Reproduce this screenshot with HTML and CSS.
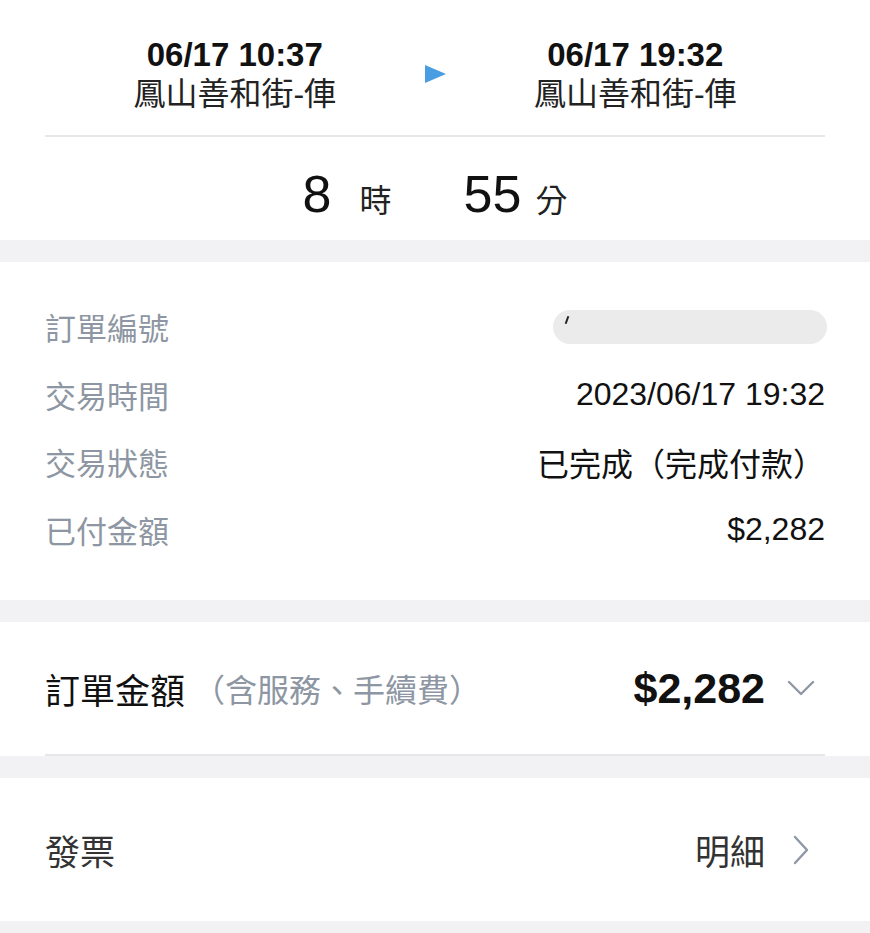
FILE: index.html
```html
<!DOCTYPE html>
<html lang="zh-Hant">
<head>
    <meta charset="UTF-8">
    <title>訂單明細</title>
    <link rel="stylesheet" href="styles.css">
</head>
<body>
    <section class="trip">
        <div class="route">
            <div class="stop">
                <div class="time">06/17 10:37</div>
                <div class="station">鳳山善和街-俥</div>
            </div>
            <div class="arrow"></div>
            <div class="stop">
                <div class="time">06/17 19:32</div>
                <div class="station">鳳山善和街-俥</div>
            </div>
        </div>
        <div class="duration">
            <span class="num num-hours">8</span><span class="unit">時</span>
            <span class="num num-mins">55</span><span class="unit">分</span>
        </div>
    </section>

    <section class="details">
        <div class="row">
            <span class="label">訂單編號</span>
            <span class="masked"></span>
        </div>
        <div class="row">
            <span class="label">交易時間</span>
            <span class="value">2023/06/17 19:32</span>
        </div>
        <div class="row">
            <span class="label">交易狀態</span>
            <span class="value">已完成（完成付款）</span>
        </div>
        <div class="row">
            <span class="label">已付金額</span>
            <span class="value">$2,282</span>
        </div>
    </section>

    <section class="total">
        <div class="total-row">
            <span class="total-label">訂單金額</span>
            <span class="total-note">（含服務、手續費）</span>
            <span class="total-amount">$2,282</span>
            <svg class="chev-down" width="28" height="16" viewBox="0 0 28 16">
                <polyline points="2,2 14,14 26,2" fill="none" stroke="#8e98a5" stroke-width="2.4" stroke-linecap="round" stroke-linejoin="round"/>
            </svg>
        </div>
    </section>

    <section class="invoice">
        <span class="invoice-label">發票</span>
        <span class="invoice-link">明細</span>
        <svg class="chev-right" width="16" height="30" viewBox="0 0 16 30">
            <polyline points="2,2 14,15 2,28" fill="none" stroke="#8e98a5" stroke-width="2.4" stroke-linecap="round" stroke-linejoin="round"/>
        </svg>
    </section>
</body>
</html>
```

FILE: styles.css
```css
body {
    margin: 0;
    background-color: #f2f2f4;
    font-family: "Liberation Sans", "Noto Sans CJK TC", sans-serif;
    color: #111;
}

section {
    background-color: #fff;
    margin-bottom: 22px;
}

/* trip header */
.trip {
    padding: 0 45px;
}
.route {
    display: grid;
    grid-template-columns: 1fr auto 1fr;
    align-items: center;
    padding: 35px 0 22px;
    border-bottom: 2px solid #e7e7e9;
}
.stop {
    text-align: center;
}
.time {
    font-size: 33px;
    font-weight: bold;
    line-height: 40px;
}
.station {
    font-size: 32px;
    line-height: 38px;
    color: #222;
}
.arrow {
    width: 0;
    height: 0;
    border-left: 21px solid #4a9de0;
    border-top: 9px solid transparent;
    border-bottom: 9px solid transparent;
}
.duration {
    display: flex;
    justify-content: center;
    align-items: baseline;
    height: 103px;
    box-sizing: border-box;
    padding-top: 31px;
}
.num {
    font-size: 52px;
    line-height: 1;
}
.unit {
    font-size: 32px;
    color: #222;
}
.num-hours {
    margin-right: 28px;
}
.num-mins {
    margin-left: 72px;
    margin-right: 14px;
}

/* detail rows */
.details {
    padding: 31px 45px 37px;
}
.row {
    display: flex;
    justify-content: space-between;
    align-items: center;
    height: 67.5px;
}
.label {
    font-size: 31px;
    color: #8d96a2;
}
.value {
    font-size: 32px;
}
.masked {
    position: relative;
    width: 274px;
    height: 34px;
    margin-right: -2px;
    background-color: #ebebeb;
    border-radius: 17px;
}
.masked::before {
    content: "";
    position: absolute;
    left: 13px;
    top: 6px;
    width: 2px;
    height: 8px;
    background-color: #222;
    transform: rotate(20deg);
}

/* order total */
.total {
    padding: 0 45px;
}
.total-row {
    display: flex;
    align-items: center;
    height: 132px;
    border-bottom: 2px solid #e7e7e9;
}
.total-label {
    font-size: 35px;
}
.total-note {
    margin-left: 8px;
    font-size: 32px;
    color: #8d96a2;
}
.total-amount {
    margin-left: auto;
    font-size: 43px;
    font-weight: bold;
}
.chev-down {
    margin: 0 10px 0 22px;
}

/* invoice */
.invoice {
    display: flex;
    align-items: center;
    height: 143px;
    padding: 0 45px;
}
.invoice-label {
    font-size: 35px;
    color: #333;
}
.invoice-link {
    margin-left: auto;
    font-size: 35px;
    color: #333;
}
.chev-right {
    margin: 0 16px 0 28px;
}
```
